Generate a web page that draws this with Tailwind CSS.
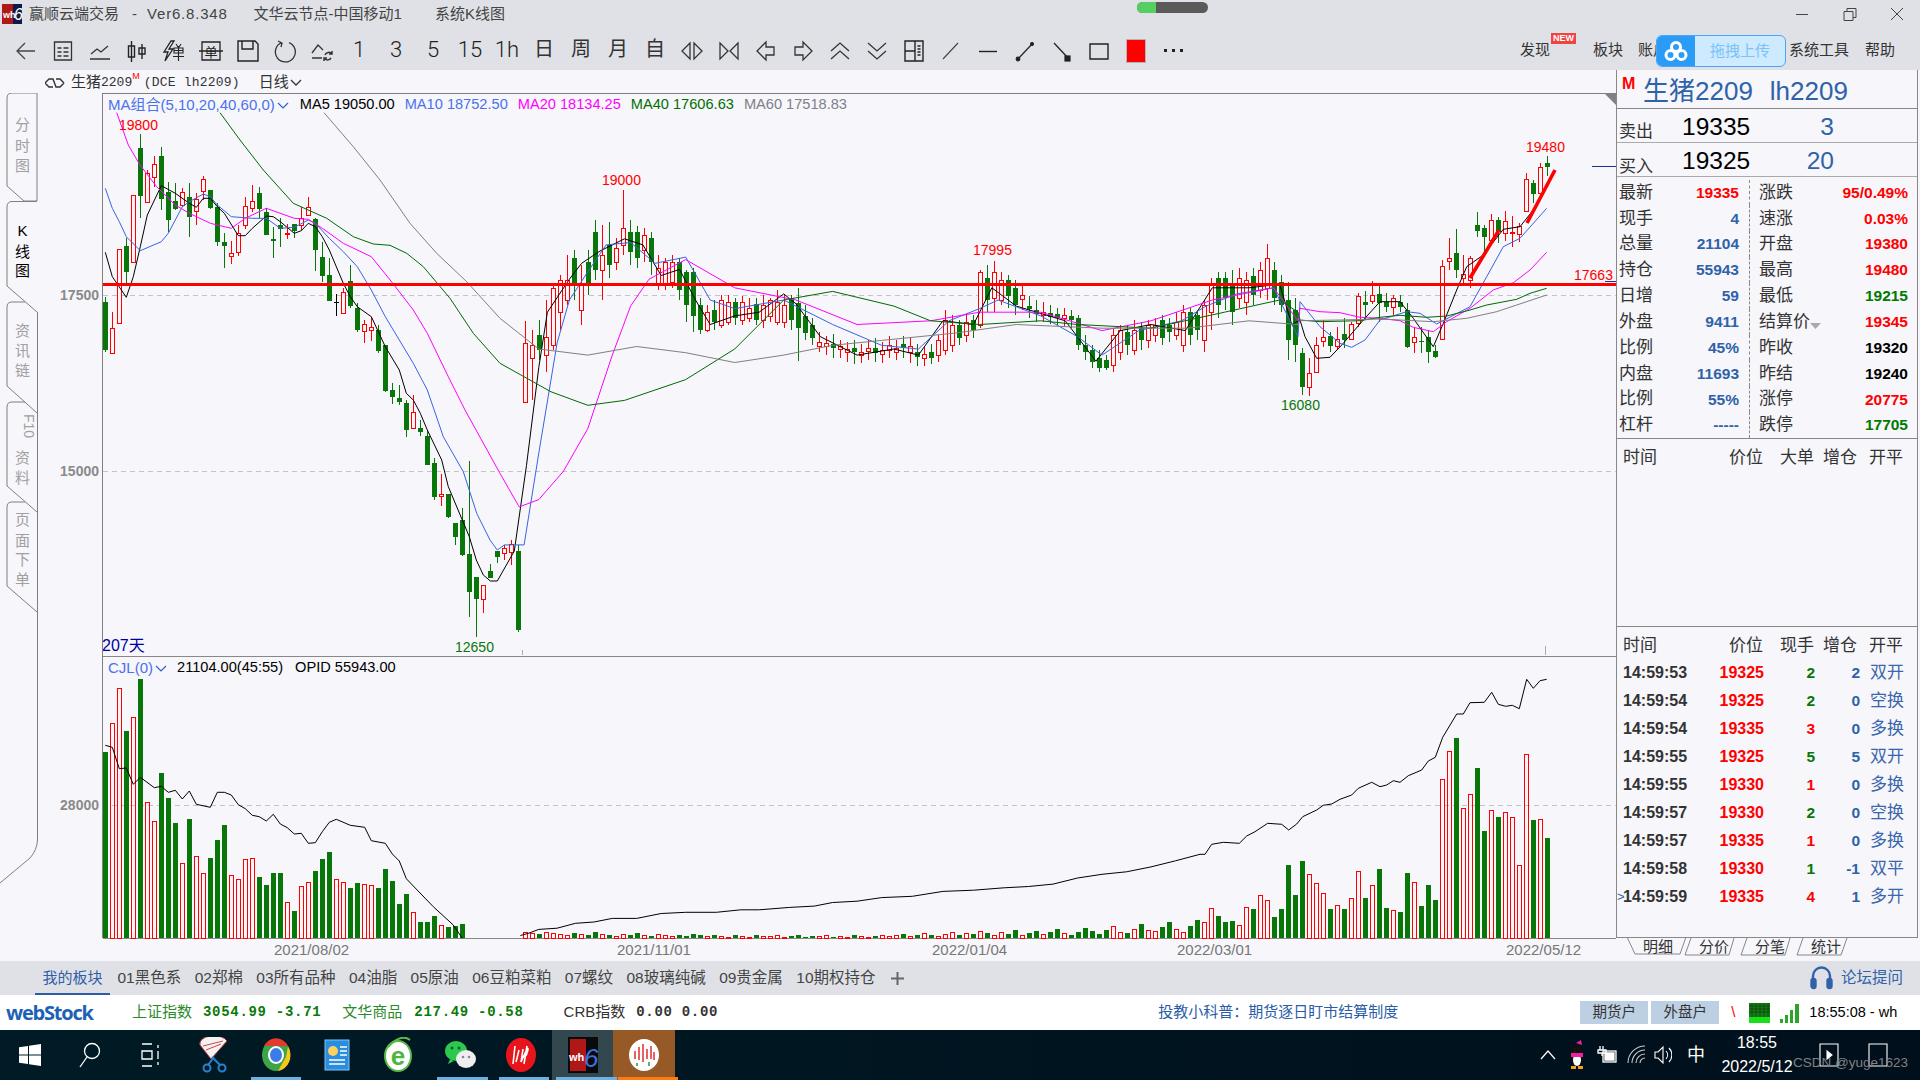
<!DOCTYPE html>
<html lang="zh-CN">
<head>
<meta charset="UTF-8">
<title>赢顺云端交易</title>
<script src="https://cdn.jsdelivr.net/npm/@tailwindcss/browser@4"></script>
</head>
<body class="w-[1920px] h-[1080px] overflow-hidden bg-[#f6f6fb] text-[#333] font-['Liberation_Sans','Noto_Sans_CJK_SC',sans-serif]">

<!-- title bar + toolbar -->
<header class="relative h-[70px] bg-[#dfe1e6]">
  <div class="flex h-[28px] items-center text-[15px] text-[#444]">
    <svg class="ml-[2px]" width="20" height="20" viewBox="0 0 20 20">
      <rect width="20" height="20" fill="#0b1a4a"/><rect width="11" height="20" fill="#b01818"/>
      <text x="1" y="14" font-size="9" font-weight="bold" fill="#fff">wh</text>
      <text x="12" y="16" font-size="16" font-style="italic" fill="#fff">6</text>
    </svg>
    <span class="ml-[7px]">赢顺云端交易</span>
    <span class="ml-[13px]">-</span>
    <span class="ml-[10px] tracking-[0.8px]">Ver6.8.348</span>
    <span class="ml-[26px]">文华云节点-中国移动1</span>
    <span class="ml-[33px]">系统K线图</span>
    <svg class="ml-auto mr-[16px]" width="108" height="16" viewBox="0 0 108 16" fill="none" stroke="#444">
      <path d="M0 8.5H12"/><path d="M48 5.5h9v9h-9z M51 5.5v-3h9v9h-3"/><path d="M95 2l12 12M107 2L95 14"/>
    </svg>
  </div>
  <div class="absolute left-[1137px] top-[2px] w-[71px] h-[11px] rounded-full bg-[#5a5a5a] overflow-hidden"><div class="w-[19px] h-full bg-[#55d060]"></div></div>

  <div class="flex h-[42px] pt-[3px] items-center text-[#333]">
    <div class="flex pl-[7.5px]">
      <div class="w-[37px] flex justify-center"><svg width="24" height="24" viewBox="0 0 24 24" fill="none" stroke="#444" stroke-width="1.3"><path d="M21 12H4M11 4l-8 8 8 8"/></svg></div>
      <div class="w-[37px] flex justify-center"><svg width="24" height="24" viewBox="0 0 24 24" fill="none" stroke="#333" stroke-width="1.3"><path d="M3.5 3h17v18h-17z"/><path d="M6.5 9h4M6.5 13h4M6.5 17h4M12.5 9h5M12.5 13h5M12.5 17h5"/></svg></div>
      <div class="w-[37px] flex justify-center"><svg width="24" height="24" viewBox="0 0 24 24" fill="none" stroke="#333" stroke-width="1.3"><path d="M3 15l6-5 4 3 7-6M2 20h20"/></svg></div>
      <div class="w-[37px] flex justify-center"><svg width="24" height="24" viewBox="0 0 24 24" fill="none" stroke="#222" stroke-width="1.4"><path d="M6.5 2v21M3.5 7h6v11h-6zM17 5v15M14 9h6v6h-6z"/></svg></div>
      <div class="w-[37px] flex justify-center"><svg width="24" height="24" viewBox="0 0 24 24" fill="none" stroke="#222" stroke-width="1.3"><path d="M9 2h3L7 10h4L3 22l3-9H2z"/><path d="M12 9h9v5h-9zM12 11.5h9M16.5 7v15M11 17.5h11M14 5l2 3M19 5l-2 3" stroke-width="1.1"/></svg></div>
      <div class="w-[37px] flex justify-center"><svg width="24" height="24" viewBox="0 0 24 24" fill="none" stroke="#222" stroke-width="1.3"><path d="M3 3h18v18H3zM0 12h24"/><text x="12" y="18" font-size="13" text-anchor="middle" fill="#222" stroke="none">单</text></svg></div>
      <div class="w-[37px] flex justify-center"><svg width="24" height="24" viewBox="0 0 24 24" fill="none" stroke="#222" stroke-width="1.4"><path d="M2 2h17l3 3v17H2zM6 2v8h11V2"/></svg></div>
      <div class="w-[37px] flex justify-center"><svg width="24" height="24" viewBox="0 0 24 24" fill="none" stroke="#333" stroke-width="1.3"><path d="M9 3.5A10 10 0 1 0 16 3.6M5 2l4 2-1 4" /></svg></div>
      <div class="w-[37px] flex justify-center"><svg width="24" height="24" viewBox="0 0 24 24" fill="none" stroke="#333" stroke-width="1.3"><path d="M2 14l6-8 5 5M2 19h10"/><path d="M15 16a4 4 0 0 1 7-1M21 19a4 4 0 0 1-6 1M22 12v3h-3M14 22v-3h3" stroke-width="1.5"/></svg></div>
      <div class="w-[37px] flex justify-center font-['Roboto'] font-light text-[22px] leading-none text-[#222]">1</div>
      <div class="w-[37px] flex justify-center font-['Roboto'] font-light text-[22px] leading-none text-[#222]">3</div>
      <div class="w-[37px] flex justify-center font-['Roboto'] font-light text-[22px] leading-none text-[#222]">5</div>
      <div class="w-[37px] flex justify-center font-['Roboto'] font-light text-[22px] leading-none text-[#222]">15</div>
      <div class="w-[37px] flex justify-center font-['Roboto'] font-light text-[22px] leading-none text-[#222]">1h</div>
      <div class="w-[37px] flex justify-center text-[20px] leading-none text-[#333]">日</div>
      <div class="w-[37px] flex justify-center text-[20px] leading-none text-[#333]">周</div>
      <div class="w-[37px] flex justify-center text-[20px] leading-none text-[#333]">月</div>
      <div class="w-[37px] flex justify-center text-[20px] leading-none text-[#333]">自</div>
      <div class="w-[37px] flex justify-center"><svg width="24" height="24" viewBox="0 0 24 24" fill="none" stroke="#333" stroke-width="1.3"><path d="M10 4L2 12l8 8zM14 4l8 8-8 8z"/></svg></div>
      <div class="w-[37px] flex justify-center"><svg width="24" height="24" viewBox="0 0 24 24" fill="none" stroke="#333" stroke-width="1.3"><path d="M3 4l8 8-8 8zM21 4l-8 8 8 8z"/></svg></div>
      <div class="w-[37px] flex justify-center"><svg width="24" height="24" viewBox="0 0 24 24" fill="none" stroke="#333" stroke-width="1.3"><path d="M12 3L3 12l9 9v-5h8V8h-8z"/></svg></div>
      <div class="w-[37px] flex justify-center"><svg width="24" height="24" viewBox="0 0 24 24" fill="none" stroke="#333" stroke-width="1.3"><path d="M12 3l9 9-9 9v-5H4V8h8z"/></svg></div>
      <div class="w-[37px] flex justify-center"><svg width="24" height="24" viewBox="0 0 24 24" fill="none" stroke="#333" stroke-width="1.3"><path d="M3 12l9-8 9 8M3 20l9-8 9 8"/></svg></div>
      <div class="w-[37px] flex justify-center"><svg width="24" height="24" viewBox="0 0 24 24" fill="none" stroke="#333" stroke-width="1.3"><path d="M3 4l9 8 9-8M3 12l9 8 9-8"/></svg></div>
      <div class="w-[37px] flex justify-center"><svg width="24" height="24" viewBox="0 0 24 24" fill="none" stroke="#222" stroke-width="1.4"><path d="M3 2h18v20H3zM13 2v20M3 12h10M15.5 7h3M15.5 10h3M15.5 13h3M15.5 16h3"/></svg></div>
      <div class="w-[37px] flex justify-center"><svg width="24" height="24" viewBox="0 0 24 24" fill="none" stroke="#444" stroke-width="1.1"><path d="M4 20L19 4"/></svg></div>
      <div class="w-[37px] flex justify-center"><svg width="24" height="24" viewBox="0 0 24 24" fill="none" stroke="#222" stroke-width="1.4"><path d="M3 12.5h18"/></svg></div>
      <div class="w-[37px] flex justify-center"><svg width="24" height="24" viewBox="0 0 24 24" fill="#222" stroke="#222" stroke-width="1.2"><path d="M5 20L19 5"/><circle cx="5" cy="20" r="1.8"/><circle cx="19" cy="5" r="1.4"/></svg></div>
      <div class="w-[37px] flex justify-center"><svg width="24" height="24" viewBox="0 0 24 24" fill="#222" stroke="#222" stroke-width="1.2"><path d="M4 4l15 16"/><rect x="15" y="17" width="5" height="5"/></svg></div>
      <div class="w-[37px] flex justify-center"><svg width="24" height="24" viewBox="0 0 24 24" fill="none" stroke="#222" stroke-width="1.4"><path d="M3 5h18v15H3z"/></svg></div>
      <div class="w-[37px] flex justify-center"><div class="w-[20px] h-[24px] bg-[#ff0000] border border-[#b4b4b4]"></div></div>
      <div class="w-[37px] flex justify-center items-center gap-[5px]"><i class="w-[3px] h-[3px] bg-[#222]"></i><i class="w-[3px] h-[3px] bg-[#222]"></i><i class="w-[3px] h-[3px] bg-[#222]"></i></div>
    </div>
    <nav class="ml-auto flex text-[15px] pr-[25px]">
      <span class="relative">发现<i class="absolute left-[31px] -top-[6px] px-[2px] h-[11px] leading-[11px] bg-[#f04444] text-white text-[9px] not-italic font-bold">NEW</i></span>
      <span class="ml-[43px]">板块</span>
      <span class="ml-[15px]">账户</span>
      <span class="ml-[121px]">系统工具</span>
      <span class="ml-[16px]">帮助</span>
    </nav>
  </div>

  <!-- floating upload widget -->
  <div class="absolute left-[1656px] top-[35px] w-[130px] h-[32px] flex rounded-[6px] overflow-hidden border border-[#4ca6f5] bg-[#cdeaff]">
    <div class="w-[38px] bg-[#2b9bf8] flex items-center justify-center">
      <svg width="24" height="22" viewBox="0 0 24 22" fill="none" stroke="#fff" stroke-width="3"><circle cx="12" cy="7" r="4.5"/><circle cx="6.5" cy="15" r="4.5"/><circle cx="17.5" cy="15" r="4.5"/></svg>
    </div>
    <span class="flex-1 text-center leading-[30px] text-[15px] text-[#7cc2f7]">拖拽上传</span>
  </div>
</header>

<!-- main: chart area + quote panel -->
<main class="flex h-[891px]">
  <section class="w-[1616px] flex flex-col">
    <div class="h-[23px] flex items-center pt-[2px] pl-[45px] text-[15px] text-[#333]">
      <svg width="20" height="12" viewBox="0 0 20 12" fill="none" stroke="#333" stroke-width="1.4"><path d="M0 6l4-4h4l3 8h4l4-4M0 6l4 4h4M11 2h4l4 4"/></svg>
      <span class="ml-[6px]">生猪</span><span class="font-['Liberation_Mono'] text-[13px]">2209</span><sup class="text-[9px] text-[#f00] -mt-[4px]">M</sup>
      <span class="ml-[4px] font-['Liberation_Mono'] text-[13px] tracking-[0.2px]">(DCE lh2209)</span>
      <span class="ml-[19px]">日线</span>
      <svg class="ml-[1px]" width="12" height="8" viewBox="0 0 12 8" fill="none" stroke="#333" stroke-width="1.3"><path d="M1 1l5 5 5-5"/></svg>
    </div>
    <div class="flex flex-1">
      <!-- side tabs + axis labels -->
      <svg id="rail" class="w-[103px] h-[868px] shrink-0" viewBox="0 93 103 868"></svg>
      <div class="relative w-[1513px] h-[868px]">
        <svg id="chart" class="block w-[1513px] h-[868px]" viewBox="103 93 1513 868"></svg>
        <div class="absolute left-[5px] top-[3px] flex items-center text-[14.6px] leading-[17px]">
          <span class="text-[15px] text-[#4a72ec]">MA组合(5,10,20,40,60,0)</span>
          <svg class="ml-[2px] mt-[3px]" width="12" height="8" viewBox="0 0 12 8" fill="none" stroke="#2a62d0" stroke-width="1.2"><path d="M1 1l5 5 5-5"/></svg>
          <span class="ml-[11px] text-black">MA5 19050.00</span>
          <span class="ml-[10px] text-[#4a72ec]">MA10 18752.50</span>
          <span class="ml-[10px] text-[#ff00ff]">MA20 18134.25</span>
          <span class="ml-[10px] text-[#007000]">MA40 17606.63</span>
          <span class="ml-[10px] text-[#808088]">MA60 17518.83</span>
        </div>
        <div class="absolute left-[5px] top-[566px] flex items-center text-[14.6px] leading-[17px]">
          <span class="text-[15px] text-[#4a72ec]">CJL(0)</span>
          <svg class="ml-[2px] mt-[3px]" width="12" height="8" viewBox="0 0 12 8" fill="none" stroke="#2a62d0" stroke-width="1.2"><path d="M1 1l5 5 5-5"/></svg>
          <span class="ml-[10px] text-black">21104.00(45:55)</span>
          <span class="ml-[12px] text-black">OPID 55943.00</span>
        </div>
      </div>
    </div>
  </section>

  <aside class="w-[304px] h-[891px]">
    <div class="w-[302px] h-[868px] border-l border-r border-b border-[#888] flex flex-col">
      <div class="h-[39px] flex items-center pt-[3px] border-b border-[#888] text-[#2f62a8] relative">
        <b class="absolute left-[5px] top-[6px] text-[16px] leading-none text-[#f00]">M</b>
        <span class="ml-[26px] text-[26px] leading-none">生猪2209</span><span class="ml-[17px] text-[26px] leading-none">lh2209</span>
      </div>
      <div class="h-[34px] flex border-b border-[#aaa] relative">
        <span class="absolute left-[2px] top-[13px] text-[17px] leading-[20px]">卖出</span>
        <span class="ml-[65px] mt-[2px] text-[24.5px] leading-[32px] text-black">19335</span>
        <span class="ml-auto mr-[83px] mt-[2px] text-[24.5px] leading-[32px] text-[#2f62a8]">3</span>
      </div>
      <div class="h-[34px] flex border-b border-[#aaa] relative">
        <span class="absolute left-[2px] top-[14px] text-[17px] leading-[20px]">买入</span>
        <span class="ml-[65px] mt-[2px] text-[24.5px] leading-[32px] text-black">19325</span>
        <span class="ml-auto mr-[83px] mt-[2px] text-[24.5px] leading-[32px] text-[#2f62a8]">20</span>
      </div>
      <div class="h-[262px] flex flex-col border-b border-[#888] text-[17px] pt-[2.5px]">
        <div class="flex h-[25.9px]"><div class="w-[133px] flex items-center justify-between pl-[2px] pr-[10px] border-r border-dashed border-[#888]"><span>最新</span><b class="text-[15.5px] text-[#f00]">19335</b></div><div class="flex-1 flex items-center justify-between pl-[9px] pr-[9px]"><span>涨跌</span><b class="text-[15.5px] text-[#f00]">95/0.49%</b></div></div>
        <div class="flex h-[25.9px]"><div class="w-[133px] flex items-center justify-between pl-[2px] pr-[10px] border-r border-dashed border-[#888]"><span>现手</span><b class="text-[15.5px] text-[#2f62a8]">4</b></div><div class="flex-1 flex items-center justify-between pl-[9px] pr-[9px]"><span>速涨</span><b class="text-[15.5px] text-[#f00]">0.03%</b></div></div>
        <div class="flex h-[25.9px]"><div class="w-[133px] flex items-center justify-between pl-[2px] pr-[10px] border-r border-dashed border-[#888]"><span>总量</span><b class="text-[15.5px] text-[#2f62a8]">21104</b></div><div class="flex-1 flex items-center justify-between pl-[9px] pr-[9px]"><span>开盘</span><b class="text-[15.5px] text-[#f00]">19380</b></div></div>
        <div class="flex h-[25.9px]"><div class="w-[133px] flex items-center justify-between pl-[2px] pr-[10px] border-r border-dashed border-[#888]"><span>持仓</span><b class="text-[15.5px] text-[#2f62a8]">55943</b></div><div class="flex-1 flex items-center justify-between pl-[9px] pr-[9px]"><span>最高</span><b class="text-[15.5px] text-[#f00]">19480</b></div></div>
        <div class="flex h-[25.9px]"><div class="w-[133px] flex items-center justify-between pl-[2px] pr-[10px] border-r border-dashed border-[#888]"><span>日增</span><b class="text-[15.5px] text-[#2f62a8]">59</b></div><div class="flex-1 flex items-center justify-between pl-[9px] pr-[9px]"><span>最低</span><b class="text-[15.5px] text-[#007a00]">19215</b></div></div>
        <div class="flex h-[25.9px]"><div class="w-[133px] flex items-center justify-between pl-[2px] pr-[10px] border-r border-dashed border-[#888]"><span>外盘</span><b class="text-[15.5px] text-[#2f62a8]">9411</b></div><div class="flex-1 flex items-center justify-between pl-[9px] pr-[9px]"><span class="flex items-center">结算价<svg class="mt-[9px]" width="11" height="6" viewBox="0 0 11 6"><path d="M0 0h11L5.5 6z" fill="#aaa"/></svg></span><b class="text-[15.5px] text-[#f00]">19345</b></div></div>
        <div class="flex h-[25.9px]"><div class="w-[133px] flex items-center justify-between pl-[2px] pr-[10px] border-r border-dashed border-[#888]"><span>比例</span><b class="text-[15.5px] text-[#2f62a8]">45%</b></div><div class="flex-1 flex items-center justify-between pl-[9px] pr-[9px]"><span>昨收</span><b class="text-[15.5px] text-black">19320</b></div></div>
        <div class="flex h-[25.9px]"><div class="w-[133px] flex items-center justify-between pl-[2px] pr-[10px] border-r border-dashed border-[#888]"><span>内盘</span><b class="text-[15.5px] text-[#2f62a8]">11693</b></div><div class="flex-1 flex items-center justify-between pl-[9px] pr-[9px]"><span>昨结</span><b class="text-[15.5px] text-black">19240</b></div></div>
        <div class="flex h-[25.9px]"><div class="w-[133px] flex items-center justify-between pl-[2px] pr-[10px] border-r border-dashed border-[#888]"><span>比例</span><b class="text-[15.5px] text-[#2f62a8]">55%</b></div><div class="flex-1 flex items-center justify-between pl-[9px] pr-[9px]"><span>涨停</span><b class="text-[15.5px] text-[#f00]">20775</b></div></div>
        <div class="flex h-[25.9px]"><div class="w-[133px] flex items-center justify-between pl-[2px] pr-[10px] border-r border-dashed border-[#888]"><span>杠杆</span><b class="text-[15.5px] text-[#2f62a8]">-----</b></div><div class="flex-1 flex items-center justify-between pl-[9px] pr-[9px]"><span>跌停</span><b class="text-[15.5px] text-[#007a00]">17705</b></div></div>
      </div>
      <div class="h-[188px] border-b border-[#888] pt-[7px]">
        <div class="flex h-[24px] items-center text-[17px] pl-[6px]"><span class="w-[106px]">时间</span><span class="w-[34px]">价位</span><span class="w-[51px] text-right">大单</span><span class="w-[43px] text-right">增仓</span><span class="w-[46px] text-right">开平</span></div>
      </div>
      <div class="flex-1 pt-[7px]">
        <div class="flex h-[24px] items-center text-[17px] pl-[6px]"><span class="w-[106px]">时间</span><span class="w-[34px]">价位</span><span class="w-[51px] text-right">现手</span><span class="w-[43px] text-right">增仓</span><span class="w-[46px] text-right">开平</span></div>
        <div id="ticks" class="mt-[1px]"></div>
      </div>
    </div>
    <svg width="304" height="23" viewBox="1616 938 304 23" class="-mt-[1px] block" text-anchor="middle" font-size="15" fill="#333">
      <path d="M1627 938l8 17h45l6-17M1691 939l-6 17h44l5-17M1747 939l-6 17h44l5-17M1803 939l-6 17h44l6-17" fill="none" stroke="#888"/>
      <text x="1658" y="953">明细</text><text x="1714" y="953">分价</text><text x="1770" y="953">分笔</text><text x="1826" y="953">统计</text>
    </svg>
  </aside>
</main>

<!-- sector tabs -->
<div class="h-[34px] bg-[#dfe1e6] flex items-center pl-[35px] pr-[17px] text-[15.5px] text-[#444]">
  <span class="w-[75px] h-full leading-[34px] text-center text-[15px] text-[#2f5ea8] border-b-2 border-[#2a5ca8]">我的板块</span>
  <span class="ml-[7.5px]">01黑色系</span><span class="ml-[13.4px]">02郑棉</span><span class="ml-[13.4px]">03所有品种</span><span class="ml-[13.4px]">04油脂</span><span class="ml-[13.4px]">05原油</span><span class="ml-[13.4px]">06豆粕菜粕</span><span class="ml-[13.4px]">07螺纹</span><span class="ml-[13.4px]">08玻璃纯碱</span><span class="ml-[13.4px]">09贵金属</span><span class="ml-[13.4px]">10期权持仓</span>
  <svg class="ml-[15px]" width="13" height="13" viewBox="0 0 13 13" stroke="#666" stroke-width="2"><path d="M6.5 0v13M0 6.5h13"/></svg>
  <span class="ml-auto flex items-center gap-[8px] text-[#2f62a8]">
    <svg class="-ml-[2px]" width="23" height="26" viewBox="0 0 23 26" fill="none" stroke="#2f62a8" stroke-width="2.4"><path d="M3 17v-6a8.5 8.5 0 0 1 17 0v6"/><rect x="1.5" y="14" width="4" height="9" rx="2" fill="#2f62a8"/><rect x="17.5" y="14" width="4" height="9" rx="2" fill="#2f62a8"/></svg>
    论坛提问
  </span>
</div>

<!-- status bar -->
<div class="h-[35px] bg-white flex items-center text-[15px]">
  <span class="ml-[6px] w-[84px] font-['Open_Sans'] font-bold text-[20px] tracking-[-1.2px] text-[#1c62b4]">webStock</span>
  <span class="ml-[42px] text-[#2b8a2b]">上证指数</span>
  <span class="ml-[11px] font-['Liberation_Mono'] font-bold text-[14px] tracking-[0.7px] text-[#0a7a0a]">3054.99 -3.71</span>
  <span class="ml-[21px] text-[#2b8a2b]">文华商品</span>
  <span class="ml-[12px] font-['Liberation_Mono'] font-bold text-[14px] tracking-[0.7px] text-[#0a7a0a]">217.49 -0.58</span>
  <span class="ml-[40px] text-[#333]">CRB指数</span>
  <span class="ml-[11px] font-['Liberation_Mono'] font-bold text-[14px] tracking-[0.7px] text-[#333]">0.00 0.00</span>
  <span class="ml-[440px] text-[#2a5ca8]">投教小科普：期货逐日盯市结算制度</span>
  <span class="ml-[182px] w-[68px] h-[23px] leading-[23px] text-center bg-[#bdd0e3] text-[14.5px]">期货户</span>
  <span class="ml-[3px] w-[68px] h-[23px] leading-[23px] text-center bg-[#bdd0e3] text-[14.5px]">外盘户</span>
  <span class="ml-[12px] text-[#f00]">\</span>
  <svg class="ml-[14px]" width="21" height="20" viewBox="0 0 21 20"><rect width="21" height="14" fill="#157a15"/><rect y="14" width="21" height="6" fill="#18e018"/><path d="M0 3h21M0 6h21M0 9h21M3 0v14M7 0v14M11 0v14M15 0v14M19 0v14" stroke="#0a3a0a" stroke-width=".6"/></svg>
  <svg class="ml-[10px]" width="20" height="20" viewBox="0 0 20 20" fill="#2aa62a"><rect y="16" width="3" height="4"/><rect x="5" y="12" width="3" height="8"/><rect x="10" y="7" width="3" height="13"/><rect x="15" y="1" width="4" height="19"/></svg>
  <span class="ml-[9px] text-[14.5px] text-black">18:55:08 - wh</span>
</div>

<!-- windows taskbar -->
<footer class="relative h-[50px] flex items-center bg-gradient-to-r from-[#001b25] to-[#000f1c] text-white">
  <div class="w-[60px] h-full flex items-center justify-center"><svg width="22" height="22" viewBox="0 0 22 22" fill="#fff"><path d="M0 3.2l9-1.3v8.6H0zM10 1.8L22 0v10.5H10zM0 11.5h9v8.6L0 18.8zM10 11.5h12V22l-12-1.8z"/></svg></div>
  <div class="w-[60px] h-full flex items-center justify-center"><svg width="22" height="26" viewBox="0 0 22 26" fill="none" stroke="#fff" stroke-width="1.3"><circle cx="13" cy="9" r="7.5"/><path d="M8 15L1 25"/></svg></div>
  <div class="w-[60px] h-full flex items-center justify-center"><svg width="22" height="24" viewBox="0 0 22 24" fill="none" stroke="#fff" stroke-width="1.3"><path d="M3 1h10M3 23h10M3 8h10v8H3zM19 2v3M19 8v8M19 19v3"/></svg></div>
  <div class="w-[65px] h-full flex items-center justify-center"><svg width="32" height="36" viewBox="0 0 32 36"><path d="M3 8a14 8 0 0 1 27-4L14 22z" fill="#f2f2f2" stroke="#b33" stroke-width="1"/><path d="M6 9l20-5M9 13l15-6" stroke="#c44" stroke-width="1"/><path d="M15 20l8 8M17 20l-6 8" stroke="#2a80d0" stroke-width="2"/><circle cx="10" cy="31" r="3.5" fill="none" stroke="#2a80d0" stroke-width="2"/><circle cx="25" cy="31" r="3.5" fill="none" stroke="#2a80d0" stroke-width="2"/></svg></div>
  <div class="w-[61.4px] h-full flex items-center justify-center"><svg width="30" height="34" viewBox="0 0 30 34"><ellipse cx="15" cy="17" rx="14" ry="16" fill="#3ca548"/><path d="M3 8a14 16 0 0 1 24 0H15z" fill="#e23b2e"/><path d="M27 8a14 16 0 0 1-10 25l8-14z" fill="#f8c51a"/><ellipse cx="15" cy="17" rx="8" ry="9" fill="#fff"/><ellipse cx="15" cy="17" rx="6" ry="7" fill="#3b7de8"/></svg></div>
  <div class="w-[61.4px] h-full flex items-center justify-center"><svg width="28" height="32" viewBox="0 0 28 32"><rect x="2" y="1" width="24" height="30" fill="#2a8ee0" stroke="#7cc4f5"/><circle cx="10" cy="12" r="5" fill="#ffd060"/><path d="M17 8h7M17 12h7M17 16h7M6 21h16M6 25h16" stroke="#fff" stroke-width="1.5"/></svg></div>
  <div class="w-[61.4px] h-full flex items-center justify-center"><svg width="30" height="36" viewBox="0 0 30 36"><ellipse cx="15" cy="19" rx="13" ry="15" fill="#fff" stroke="#58b947" stroke-width="2"/><text x="15" y="28" font-size="26" font-weight="bold" text-anchor="middle" fill="#4fb53e">e</text><path d="M5 10Q18-4 27 3" fill="none" stroke="#58b947" stroke-width="2"/></svg></div>
  <div class="w-[61.4px] h-full flex items-center justify-center"><svg width="32" height="30" viewBox="0 0 32 30"><ellipse cx="12" cy="11" rx="11" ry="10" fill="#2dc84d"/><path d="M6 19l-2 5 6-3z" fill="#2dc84d"/><ellipse cx="22" cy="19" rx="10" ry="9" fill="#eee"/><circle cx="8" cy="8" r="1.5" fill="#063"/><circle cx="15" cy="8" r="1.5" fill="#063"/><circle cx="19" cy="17" r="1.3" fill="#888"/><circle cx="25" cy="17" r="1.3" fill="#888"/></svg></div>
  <div class="w-[61.4px] h-full flex items-center justify-center"><svg width="32" height="36" viewBox="0 0 32 36"><ellipse cx="16" cy="18" rx="15" ry="17" fill="#e8141c"/><path d="M10 9l-2 18M14 13l-3 12M18 12l-2 13 6-13q2-2 0 4-1 4-3 3M22 9l-3 18" fill="none" stroke="#fff" stroke-width="1.6"/></svg></div>
  <div class="w-[61.4px] h-full flex items-center justify-center bg-[#33474f]"><svg width="30" height="36" viewBox="0 0 30 36"><rect width="30" height="36" fill="#0a0a0a"/><rect x="2" y="2" width="16" height="32" fill="#b01818"/><text x="1" y="24" font-size="11" font-weight="bold" fill="#fff">wh</text><text x="16" y="30" font-size="26" font-style="italic" fill="#3a70e0">6</text></svg></div>
  <div class="w-[61.4px] h-full flex items-center justify-center bg-[#975a27]"><svg width="30" height="32" viewBox="0 0 30 32"><ellipse cx="15" cy="16" rx="15" ry="16" fill="#fff"/><path d="M6 12v8M10 8v13M14 5v18M18 10v10M22 7v13M25 13v8" stroke="#d22" stroke-width="1.4"/><path d="M8 24v3M20 23v4" stroke="#2a8a2a" stroke-width="1.4"/></svg></div>
  <div class="absolute bottom-0 left-[251px] w-[50px] h-[3px] bg-[#6fb0e0]"></div>
  <div class="absolute bottom-0 left-[437px] w-[51px] h-[3px] bg-[#6fb0e0]"></div>
  <div class="absolute bottom-0 left-[499px] w-[50px] h-[3px] bg-[#6fb0e0]"></div>
  <div class="absolute bottom-0 left-[556px] w-[61px] h-[3px] bg-[#6fb0e0]"></div>
  <div class="absolute bottom-0 left-[618px] w-[60px] h-[3px] bg-[#ff7a10]"></div>

  <div class="ml-auto flex items-center pr-[32px] text-[15px]">
    <svg width="16" height="10" viewBox="0 0 16 10" fill="none" stroke="#fff" stroke-width="1.2"><path d="M1 9l7-8 7 8"/></svg>
    <svg class="ml-[12px]" width="18" height="30" viewBox="0 0 18 30"><ellipse cx="9" cy="16" rx="6" ry="11" fill="#111"/><ellipse cx="9" cy="20" rx="4" ry="6" fill="#fff"/><path d="M3 13h12v4H3z" fill="#f020a0"/><path d="M8 3l5-3 1 5z" fill="#f020a0"/><path d="M3 29h5v-3H3zM10 29h5v-3h-5z" fill="#f5a020"/></svg>
    <svg class="ml-[11px]" width="20" height="20" viewBox="0 0 20 20" fill="none" stroke="#fff" stroke-width="1.3"><path d="M3 1v4M6 1v4M1 5h8v3H1zM5 8v3"/><rect x="6" y="6" width="13" height="11" fill="#fff" fill-opacity=".1"/><path d="M8 8h9v7H8z" fill="#fff"/></svg>
    <svg class="ml-[10px]" width="20" height="20" viewBox="0 0 20 20" fill="none" stroke="#ccc" stroke-width="1.1"><path d="M1 18A17 17 0 0 1 18 1M5 18A13 13 0 0 1 18 5M9 18a9 9 0 0 1 9-9M13 18a5 5 0 0 1 5-5"/></svg>
    <svg class="ml-[7px]" width="18" height="20" viewBox="0 0 18 20" fill="none" stroke="#fff" stroke-width="1.1"><path d="M1 7h3l5-5v16l-5-5H1zM12 6a6 6 0 0 1 0 8M15 3a10 10 0 0 1 0 14"/></svg>
    <span class="ml-[15px] text-[18px]">中</span>
    <div class="ml-[12px] w-[80px] text-center leading-[24px] text-[16px]"><div>18:55</div><div>2022/5/12</div></div>
    <svg class="ml-[22px]" width="20" height="24" viewBox="0 0 20 24" fill="none" stroke="#fff" stroke-width="1.1"><path d="M1 1h18v22H1z"/><path d="M8 8l5 4-5 4z" fill="#fff"/></svg>
    <svg class="ml-[29px]" width="20" height="24" viewBox="0 0 20 24" fill="none" stroke="#fff" stroke-width="1.1"><path d="M1 1h18v22H1z"/></svg>
  </div>
  <span class="absolute left-[1793px] top-[23px] whitespace-nowrap text-[13.5px] text-[#808080]">CSDN @yuge1623</span>
</footer>

<script>
// helpers: all chart coordinates are page pixels, read off the reference crops
const seg = (sx, ox, sy, oy, a) => { const r = []; for (let i = 0; i < a.length; i += 2) r.push([ox + a[i] * sx, oy + a[i + 1] * sy]); return r; };
const Z8 = a => seg(1/3, 0, 1/3, 90, a), Z9 = a => seg(1/3, 0, 1/3, 400, a), OV = a => seg(1.2245, 0, 1.2245, 0, a),
      Z10 = a => seg(1/3, 1300, 1/3, 130, a), Z11 = a => seg(1/3, 0, 1/3, 650, a), Z12 = a => seg(1/3, 1200, 1/3, 660, a);

// [colour, high, bodyTop, bodyBottom, low]
const candles = [
['g',297,302,350,352],['r',312,328,353,353],['r',249,249,323,323],['g',238,246,272,285],['r',195,195,262,262],['g',134,148,196,218],['r',170,173,202,202],['r',156,164,177,187],['g',147,156,199,210],['g',182,192,220,232],
['g',183,201,209,210],['r',188,192,205,207],['g',183,197,217,237],['r',193,199,211,225],['r',176,179,191,200],['g',190,190,208,209],['g',203,207,242,246],['g',233,242,246,268],['r',241,253,256,264],['r',225,233,252,256],
['r',197,206,225,229],['r',185,201,208,212],['g',187,193,209,218],['g',208,212,235,235],['g',227,239,241,258],['g',218,225,229,247],['r',224,233,234,239],['g',224,224,231,238],['r',207,218,225,230],['r',197,207,215,215],
['g',218,219,250,271],['g',242,257,276,282],['g',258,275,301,301],['k',294,302,303,316],['r',288,292,313,313],['g',265,281,306,308],['g',303,308,330,332],['r',320,324,331,343],['r',317,327,330,341],['g',325,330,351,353],
['g',345,345,391,392],['g',383,390,397,404],['g',385,398,402,405],['g',400,403,430,437],['r',395,412,428,428],['g',420,428,432,436],['g',430,436,465,465],['g',458,463,497,500],['r',474,494,496,506],['g',494,494,517,518],
['g',523,523,537,545],['g',508,520,555,556],['g',461,554,592,617],['g',577,577,599,637],['r',585,585,599,613],['g',564,571,578,578],['g',551,551,557,563],['r',545,548,553,560],['r',540,544,552,565],['g',545,551,630,632],
['r',321,343,402,402],['r',330,345,358,400],['g',320,335,350,360],['r',300,337,355,372],['r',284,288,345,350],['r',275,280,312,330],['r',255,280,300,305],['g',250,258,285,300],['r',265,283,310,325],['g',250,262,283,295],
['g',220,232,270,280],['r',225,255,270,300],['g',222,245,265,278],['r',238,248,262,270],['r',190,228,245,255],['g',220,232,252,265],['g',226,232,258,268],['r',228,235,250,262],['g',232,238,262,275],['r',255,268,285,290],
['r',258,262,285,290],['r',255,262,282,288],['g',258,262,290,300],['g',270,272,305,322],['g',268,272,316,332],['g',298,305,330,334],['r',305,312,330,332],['g',300,310,322,330],['r',295,300,325,328],['r',295,302,322,325],
['g',298,302,318,325],['r',296,302,320,325],['r',298,308,318,322],['g',298,304,320,325],['r',295,305,320,328],['r',298,300,316,322],['r',290,302,322,325],['r',295,305,322,328],['g',295,298,320,330],['g',288,303,328,361],
['g',305,316,333,340],['g',318,325,338,345],['r',332,342,346,352],['r',336,343,346,355],['g',334,344,348,358],['r',340,346,349,358],['r',342,349,352,362],['g',340,348,352,364],['r',344,352,355,363],['r',340,348,351,360],
['g',338,348,353,362],['r',342,350,354,363],['r',336,345,350,358],['r',340,348,352,360],['g',336,344,348,358],['r',338,346,352,363],['g',344,352,357,366],['r',346,354,358,366],['g',344,352,358,364],['r',335,340,355,362],
['r',310,320,350,355],['r',315,325,345,352],['g',320,325,338,345],['r',315,322,335,342],['g',315,320,330,338],['r',270,272,325,328],['g',265,278,300,312],['r',261,272,298,312],['r',272,280,300,305],['g',275,280,296,308],
['g',280,288,305,315],['r',284,295,299,310],['g',296,306,309,318],['g',300,310,314,322],['r',302,312,315,322],['g',305,313,317,324],['g',308,314,318,325],['r',308,315,318,326],['g',310,316,320,328],['g',315,318,345,350],
['g',335,345,352,360],['g',345,350,362,368],['g',350,358,368,372],['g',355,360,368,370],['r',328,335,365,372],['r',325,330,352,360],['g',325,332,345,355],['r',320,330,350,355],['g',322,328,340,350],['r',320,325,340,348],
['r',318,325,335,342],['g',315,320,338,345],['g',318,325,332,342],['r',312,322,335,340],['r',305,312,345,352],['g',308,312,335,345],['g',310,315,330,340],['r',300,305,340,352],['r',278,285,312,330],['g',272,278,305,318],
['g',272,278,298,310],['g',270,285,312,325],['r',268,278,298,308],['r',272,280,302,315],['g',268,276,295,305],['r',262,270,290,298],['r',244,258,288,300],['g',262,270,298,305],['g',275,282,305,312],['g',282,300,340,360],
['g',298,310,345,362],['g',348,353,387,395],['r',358,373,387,396],['r',337,345,372,372],['r',320,337,341,347],['g',332,336,346,352],['r',327,339,346,350],['g',318,334,340,348],['r',322,324,339,339],['r',293,296,323,327],
['g',291,302,305,320],['r',281,295,301,304],['g',285,294,303,322],['g',293,302,307,312],['r',295,298,307,315],['g',295,302,307,312],['g',303,310,347,348],['r',328,337,342,353],['g',327,341,342,353],['g',330,337,352,363],
['g',345,351,357,358],['r',260,266,339,339],['r',238,258,261,270],['g',229,253,270,278],['r',255,274,278,283],['r',256,258,280,288],['g',212,225,231,237],['g',225,228,237,252],['r',214,220,240,240],['g',217,220,232,243],
['r',211,221,233,241],['r',216,232,233,247],['r',223,226,234,242],['r',173,179,211,211],['g',180,183,194,203],['r',163,167,193,193],['g',156,163,167,176]];

// volume bar tops
const volA = [306,220,115,243,202,87,457,514,369,444,519,640,507,619,670,624,570,525,676,688,628,625,681,705,669,669,757,783,709,697,663,627,606,688,697,714,699,703,706,714,657,693,762,732,787,816,816,798,826,831,828,822].map(z => 650 + z / 3);
const volMid = [6,5,4,6,5,4,3,5,4,3,6,4,3,2,4,3,5,3,2,4,3,2,3,2,4,3,2,3,2,1,3,2,1,3,2,2,3,1,2,3,1,2,2,3,1,2,1,3,2,1,2,3,2,3,4,2,3,5,3,2,4,6,3,5,4,7,5,3,6,4,8,3,5,7,4,6,9,5,3,6,10,7,4,8,12,6,5,9,14,8,7,11,16,9,6,12,18].map(h => 938 - h);
const volB = [787,745,768,786,783,796,742,747,706,721,771,747,615,705,603,643,670,700,747,736,747,715,634,714,676,627,744,751,756,639,667,738,675,720,358,274,234,445,403,324,513,451,471,457,472,616,283,480,478,534].map(z => 660 + z / 3);
const volTop = i => i <= 51 ? volA[i] : i < 60 ? null : i <= 156 ? volMid[i - 60] : volB[i - 157];

const lines = [
 ['#000', [...Z8([316,487,337,560,379,622,400,560,421,470,442,375,484,287,526,310,568,340,589,352,610,325,631,325,652,350,673,370,715,437,736,437,757,415,799,378,820,380,841,395,883,430,904,422,925,400,946,410,967,440,988,480,1030,580,1051,620,1072,650,1114,680,1156,770,1198,840,1219,910]),
   ...Z9([1240,0,1261,40,1282,90,1325,180,1345,260,1387,360,1408,410,1429,480,1450,525,1471,543,1492,543]),
   ...OV([420,450,430,380,440,300,447,255,465,228,475,215,490,205,510,195,525,200,540,225,555,220,568,245,580,265,600,258,620,255,640,240,650,248,670,275,700,290,730,285,750,290,770,262,795,265,810,235,830,250,870,262,895,295,915,270,940,265,968,270,990,235,1020,235,1045,232,1055,265]),
   ...Z10([0,570,15,620,50,685,90,682,130,640,190,570,240,515,300,515,340,565,400,650,430,580,470,480,500,410,550,375,610,298,660,290,700,240,740,170])]],
 ['#3a63e0', [...Z8([316,295,337,355,358,395,379,440,421,482,484,455,505,430,547,350,568,335,610,312,631,320,652,345,694,380,757,385,799,385,841,415,883,412,925,390,946,400,988,445,1030,485,1072,530,1114,600,1156,680,1198,750,1240,820,1282,900]),
   ...Z9([1330,110,1390,215,1430,340,1470,420,1492,450]),
   ...OV([412,445,428,445,440,370,455,280,465,245,480,222,495,200,515,198,535,215,560,210,580,245,600,252,640,245,680,265,720,282,750,285,775,262,800,252,815,245,850,258,880,275,900,290,930,270,965,262,985,250,1010,240,1040,235,1060,275]),
   ...Z10([0,515,60,590,120,640,155,652,195,630,240,570,320,545,360,550,410,582,510,530,560,440,610,350,660,325,740,235])]],
 ['#ff00ff', [...Z8([350,68,385,165,420,225,470,290,526,345,568,370,631,400,694,415,736,385,799,355,883,385,925,388,967,415,1030,460,1114,500,1177,578,1240,660,1282,730,1345,860,1395,960]),
   ...OV([408,386,424,414,440,408,460,385,480,350,500,290,515,250,530,228,560,212,600,235,650,245,700,265,760,262,800,255,850,255,900,270,940,262,990,245,1040,235,1060,262]),
   ...Z10([0,535,60,545,120,548,180,562,240,565,300,572,340,592,400,605,440,575,510,535,580,480,640,458,690,420,740,367])]],
 ['#006a00', [...Z8([660,68,720,150,790,240,880,340,980,385,1060,440,1120,462,1170,466,1220,490,1270,530,1350,625,1420,730,1500,820]),
   ...OV([450,320,480,331,510,327,560,310,600,285,640,245,680,238,730,250,760,262,800,265,850,262,880,265,940,268,1000,255,1045,245,1060,255]),
   ...Z10([0,570,60,575,180,572,240,562,300,556,380,562,440,558,510,540,560,525,650,508,690,490,740,475])]],
 ['#808080', [...Z8([972,68,1060,170,1140,270,1230,400,1310,490,1400,575,1500,685]),
   ...OV([440,285,480,290,520,283,560,288,600,296,640,290,680,282,720,278,780,272,830,265,900,268,970,268,1020,262,1060,265]),
   ...Z10([0,572,120,570,240,567,400,575,500,565,590,545,650,525,740,495])]],
 ['#000', [...Z11([316,286,337,292,358,356,379,354,400,403,421,382,463,413,484,409,505,427,526,421,547,447,568,423,589,463,631,472,652,427,673,427,694,435,715,464,736,476,757,496,778,500,799,513,820,493,841,522,862,533,883,552,904,550,925,580,946,578,967,545,988,517,1009,508,1051,526,1094,532,1114,572,1156,580,1177,612,1198,633,1219,686,1240,708,1300,770,1360,825,1387,865])]],
 ['#000', [...OV([425,764,432,762,440,759,455,758,470,754,485,753,500,750,520,750,540,746,560,745,585,745,605,743,620,743,645,741,665,740,680,737,700,736,720,733,745,732,770,728,795,727,820,725,840,724,860,722,880,717,900,714,920,712,940,708,960,703]),
   ...Z12([0,583,15,583,35,553,70,547,118,550,140,528,165,515,203,490,245,493,266,510,290,492,308,470,350,450,370,436,395,432,420,418,455,405,475,385,515,367,540,380,560,375,580,362,600,367,625,347,665,330,685,303,706,292,728,232,770,162,790,162,810,128,853,127,875,97,895,133,917,139,937,136,958,146,980,58,1000,85,1020,62,1040,58])]]
];

const RED = '#ff0000', GREEN = '#087608';
let s = '';
// grid + panes
for (const y of [295.5, 471.5, 805.5]) s += `<path d="M103 ${y}H1616" stroke="#c4c4c8" stroke-dasharray="5 4"/>`;
s += `<path d="M103 656.5H1616M103 938.5H1616" stroke="#888"/>`;
s += `<path d="M522.5 650v5M1545.5 646v9" stroke="#aaa"/>`;
// volume bars
candles.forEach((c, i) => {
  const t = volTop(i); if (t == null) return;
  const x = 103 + 7 * i;
  s += c[0] === 'g' ? `<rect x="${x}" y="${t}" width="5" height="${938 - t}" fill="${GREEN}"/>`
                    : `<rect x="${x + .5}" y="${Math.round(t) + .5}" width="4" height="${938 - Math.round(t)}" fill="none" stroke="${RED}"/>`;
});
// candles
candles.forEach((c, i) => {
  const [col, hi, top, bot, lo] = c, x = 103 + 7 * i, cx = x + 2.5, k = col === 'g' ? GREEN : col === 'k' ? '#000' : RED;
  if (col === 'r') s += `<path d="M${cx} ${hi}V${top}M${cx} ${bot}V${lo}" stroke="${k}"/><rect x="${x + .5}" y="${top + .5}" width="4" height="${bot - top}" fill="#f6f6fb" stroke="${k}"/>`;
  else s += `<path d="M${cx} ${hi}V${lo}" stroke="${k}"/><rect x="${x}" y="${top}" width="5" height="${Math.max(bot - top, 1)}" fill="${k}"/>`;
});
// moving averages and the open-interest line
for (const [c, p] of lines) s += `<polyline fill="none" stroke="${c}" points="${p.map(q => q[0].toFixed(1) + ',' + q[1].toFixed(1)).join(' ')}"/>`;
// drawn objects
s += `<path d="M103 284.5H1616" stroke="#f00" stroke-width="3"/>`;
s += `<path d="M1470 278L1499 230M1527 223L1555 170" stroke="#f00" stroke-width="3.6" stroke-linecap="butt"/>`;
s += `<path d="M1592 166.5H1616M1605 281.5H1616" stroke="#1a2f9a"/>`;
s += `<path d="M1604 93H1616V105z" fill="#808080"/><path d="M103 93.5H1616" stroke="#808080"/>`;
// labels
const label = (x, y, t, f, extra = '') => `<text x="${x}" y="${y}" fill="${f}" font-size="14" ${extra}>${t}</text>`;
s += label(119, 130, '19800', RED) + label(602, 185, '19000', RED) + label(973, 255, '17995', RED) + label(1526, 152, '19480', RED) + label(1574, 280, '17663', RED);
s += label(1281, 410, '16080', GREEN) + label(455, 652, '12650', GREEN);
s += label(102, 651, '207天', '#0000a0', 'style="font-size:16px"');
for (const [x, t] of [[274,'2021/08/02'],[617,'2021/11/01'],[932,'2022/01/04'],[1177,'2022/03/01'],[1506,'2022/05/12']]) s += label(x, 955, t, '#777', 'style="font-size:15px"');
document.getElementById('chart').innerHTML = s;

// side rail
let r = `<g fill="none" stroke="#808080">
<path d="M7 186V98Q7 93 12 93H37V201H24L7 186"/>
<path d="M37 201.5H12Q7 201.5 7 207V286L37 312"/>
<path d="M25 302H12Q7 302 7 307V386L37 413"/>
<path d="M25 402H12Q7 402 7 407V486L37 512"/>
<path d="M25 502H12Q7 502 7 507V586L37 612"/>
<path d="M37.5 312V840Q37 850 30 858L0 883" />
<path d="M102.5 93V938"/></g>`;
const ch = (t, y, f = '#a0a0a0') => `<text x="22.5" y="${y}" text-anchor="middle" font-size="15" fill="${f}">${t}</text>`;
r += ch('分',130) + ch('时',151) + ch('图',171);
r += ch('K',236,'#000') + ch('线',257,'#000') + ch('图',276,'#000');
r += ch('资',336) + ch('讯',356) + ch('链',376);
r += `<text x="10" y="424" transform="rotate(90 22 426)" font-size="14" fill="#a0a0a0">F10</text>` + ch('资',463) + ch('料',483);
r += ch('页',525) + ch('面',546) + ch('下',565) + ch('单',585);
for (const [y, t] of [[300,'17500'],[476,'15000'],[810,'28000']]) r += `<text x="99" y="${y}" text-anchor="end" font-weight="bold" font-size="14" fill="#8a8a8a">${t}</text>`;
document.getElementById('rail').innerHTML = r;

// trade ticks
const ticks = [['14:59:53','19325','2','g','2','双开'],['14:59:54','19325','2','g','0','空换'],['14:59:54','19335','3','r','0','多换'],['14:59:55','19325','5','g','5','双开'],['14:59:55','19330','1','r','0','多换'],['14:59:57','19330','2','g','0','空换'],['14:59:57','19335','1','r','0','多换'],['14:59:58','19330','1','g','-1','双平'],['14:59:59','19335','4','r','1','多开']];
document.getElementById('ticks').innerHTML = ticks.map((t, i) => `<div class="relative flex h-[28px] items-center pl-[6px] font-bold text-[15.5px]">
  ${i === 8 ? '<span class="absolute left-[0px] font-normal text-[#2f62a8] text-[13px]">&gt;</span>' : ''}
  <span class="w-[89px] text-[#333] text-[16px]">${t[0]}</span><span class="w-[52px] text-right text-[#f00] text-[16px]">${t[1]}</span>
  <span class="w-[51px] text-right ${t[3] === 'g' ? 'text-[#087608]' : 'text-[#f00]'}">${t[2]}</span>
  <span class="w-[45px] text-right text-[#2f62a8]">${t[4]}</span><span class="ml-[10px] font-normal text-[17px] text-[#3a66aa]">${t[5]}</span></div>`).join('');
</script>
</body>
</html>
